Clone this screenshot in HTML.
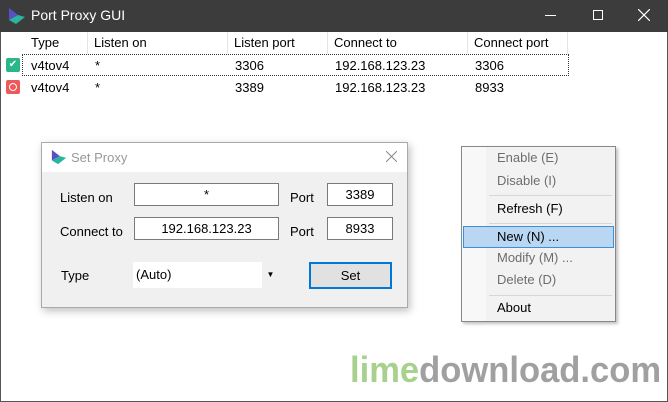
<!DOCTYPE html>
<html><head><style>
*{margin:0;padding:0;box-sizing:border-box}
body{width:668px;height:402px;overflow:hidden;background:#fff;font-family:"Liberation Sans","Noto Sans CJK SC",sans-serif;font-size:13px;color:#000;position:relative}
.a{position:absolute;white-space:nowrap}
.tb{left:0;top:0;width:668px;height:32px;background:#3c3c3c;color:#fff}
.hd{top:32px;height:22px;border-right:1px solid #e5e5e5;padding-left:6px;line-height:21px}
.inp{background:#fff;border:1px solid #7a7a7a;text-align:center;line-height:21px}
.mi{left:497px;line-height:20px}
.dis{color:#6d6d6d}
.sep{left:489px;width:123px;height:1px;background:#d7d7d7}
</style></head><body>
<div class="a" style="left:0;top:0;width:668px;height:402px;border:1px solid #555"></div>
<div class="a tb"></div>
<svg class="a" style="left:8px;top:7px" width="18" height="18" viewBox="0 0 18 18"><polygon points="1,1 1,13 10,8" fill="#5b4fc7"/><polygon points="1,13 10,8 17,10 8,17" fill="#2bb5a0"/></svg>
<div class="a" style="left:31px;top:7px;color:#fff;font-size:14px">Port Proxy GUI</div>
<div class="a" style="left:545px;top:15px;width:11px;height:1px;background:#fff"></div>
<div class="a" style="left:593px;top:10px;width:10px;height:10px;border:1px solid #fff"></div>
<svg class="a" style="left:638px;top:9px" width="12" height="12"><path d="M0 0L12 12M12 0L0 12" stroke="#fff" stroke-width="1.2"/></svg>
<div class="a hd" style="left:25px;width:63px">Type</div>
<div class="a hd" style="left:88px;width:140px">Listen on</div>
<div class="a hd" style="left:228px;width:100px">Listen port</div>
<div class="a hd" style="left:328px;width:140px">Connect to</div>
<div class="a hd" style="left:468px;width:100px">Connect port</div>
<div class="a" style="left:22px;top:54px;width:547px;height:22px;border:1px dotted #333"></div>
<div class="a" style="left:6px;top:58px;width:14px;height:14px;background:#2bb58a;border-radius:2px;color:#fff;font-size:10px;text-align:center;line-height:14px">✔</div>
<div class="a" style="left:6px;top:80px;width:14px;height:14px;background:#ec5a5a;border-radius:2px"></div>
<div class="a" style="left:9px;top:83px;width:8px;height:8px;border:1.5px solid #fff;border-radius:50%"></div>
<div class="a" style="left:31px;top:58px">v4tov4</div><div class="a" style="left:95px;top:58px">*</div><div class="a" style="left:235px;top:58px">3306</div><div class="a" style="left:335px;top:58px">192.168.123.23</div><div class="a" style="left:475px;top:58px">3306</div>
<div class="a" style="left:31px;top:80px">v4tov4</div><div class="a" style="left:95px;top:80px">*</div><div class="a" style="left:235px;top:80px">3389</div><div class="a" style="left:335px;top:80px">192.168.123.23</div><div class="a" style="left:475px;top:80px">8933</div>

<div class="a" style="left:41px;top:142px;width:367px;height:166px;background:#f0f0f0;border:1px solid #aaa;box-shadow:2px 3px 8px rgba(0,0,0,.25)"></div>
<div class="a" style="left:42px;top:143px;width:365px;height:29px;background:#fff"></div>
<svg class="a" style="left:51px;top:149px" width="16" height="16" viewBox="0 0 18 18"><polygon points="1,1 1,13 10,8" fill="#5b4fc7"/><polygon points="1,13 10,8 17,10 8,17" fill="#2bb5a0"/></svg>
<div class="a" style="left:71px;top:150px;color:#999">Set Proxy</div>
<svg class="a" style="left:386px;top:151px" width="11" height="11"><path d="M0 0L11 11M11 0L0 11" stroke="#888"/></svg>
<div class="a" style="left:60px;top:190px">Listen on</div>
<div class="a" style="left:60px;top:224px">Connect to</div>
<div class="a" style="left:61px;top:268px">Type</div>
<div class="a" style="left:290px;top:190px">Port</div>
<div class="a" style="left:290px;top:224px">Port</div>
<div class="a inp" style="left:134px;top:183px;width:145px;height:23px">*</div>
<div class="a inp" style="left:134px;top:217px;width:145px;height:23px">192.168.123.23</div>
<div class="a inp" style="left:327px;top:183px;width:66px;height:23px">3389</div>
<div class="a inp" style="left:327px;top:217px;width:66px;height:23px">8933</div>
<div class="a" style="left:133px;top:262px;width:146px;height:26px;background:#fff;line-height:25px;padding-left:3px">(Auto)</div>
<div class="a" style="left:262px;top:262px;width:17px;height:26px;background:#f0f0f0;font-size:8px;text-align:center;line-height:26px">▼</div>
<div class="a" style="left:309px;top:262px;width:83px;height:27px;background:#e1e1e1;border:2px solid #0078d7;text-align:center;line-height:23px">Set</div>

<div class="a" style="left:461px;top:146px;width:155px;height:176px;background:#f2f2f2;border:1px solid #888;box-shadow:2px 2px 3px rgba(0,0,0,.25)"></div>
<div class="a" style="left:462px;top:147px;width:24px;height:174px;background:#f8f8f8"></div>
<div class="a mi dis" style="top:148px">Enable (E)</div>
<div class="a mi dis" style="top:171px">Disable (I)</div>
<div class="a sep" style="top:195px"></div>
<div class="a mi" style="top:199px">Refresh (F)</div>
<div class="a sep" style="top:223px"></div>
<div class="a" style="left:463px;top:226px;width:151px;height:22px;background:#b9d7f2;border:1px solid #3f8ed8"></div>
<div class="a mi" style="top:227px">New (N) ...</div>
<div class="a mi dis" style="top:248px">Modify (M) ...</div>
<div class="a mi dis" style="top:270px">Delete (D)</div>
<div class="a sep" style="top:295px"></div>
<div class="a mi" style="top:298px">About</div>

<div class="a" style="left:350px;top:350px;font-size:36px;font-weight:bold;line-height:40px;transform:scaleX(0.96);transform-origin:0 0"><span style="color:#a9d18e">lime</span><span style="color:#a0a0a0">download.com</span></div>
</body></html>
